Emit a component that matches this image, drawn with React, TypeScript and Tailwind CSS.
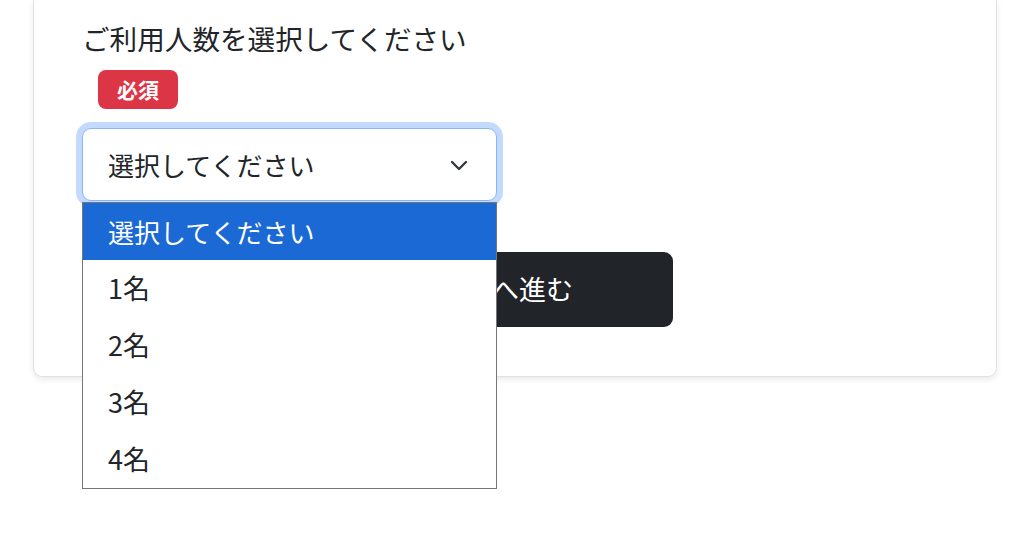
import React from "react";

const font = { fontFamily: '"Noto Sans CJK JP", "Noto Sans", sans-serif' };

export default function App() {
  const options = ["選択してください", "1名", "2名", "3名", "4名"];
  return (
    <div className="min-h-screen bg-white text-[#212529]" style={font}>
      <div className="ml-[33px] w-[964px] bg-white border border-t-0 border-[#dee2e6] rounded-b-[9px] shadow-[0_3px_6px_rgba(0,0,0,0.08)] pl-[48px] pr-[48px] pt-[18px] pb-[49px]">
        <div className="text-[27.6px] leading-[40px]">ご利用人数を選択してください</div>
        <div className="mt-[12px] ml-[16px] inline-flex h-[39px] w-[80px] items-center justify-center rounded-[8px] bg-[#dc3545] text-[21px] font-bold text-white">
          必須
        </div>
        <div className="relative mt-[19px] w-[415px]">
          <div className="flex h-[73px] items-center justify-between rounded-[9px] border border-[#86b7fe] bg-white pl-[25px] pr-[28px] text-[26px] ring-[6px] ring-[#c3dafe]">
            <span>選択してください</span>
            <svg width="18" height="12" viewBox="0 0 18 12" fill="none">
              <path d="M2 3l7 7 7-7" stroke="#343a40" strokeWidth="2.4" strokeLinecap="round" strokeLinejoin="round" />
            </svg>
          </div>
          <div className="absolute left-0 top-[74px] z-10 w-[415px] border border-[#767676] bg-white">
            {options.map((o, i) => (
              <div
                key={o}
                className={
                  i === 0
                    ? "flex h-[57px] items-center bg-[#1a69d4] pl-[25px] text-[26px] text-white"
                    : "flex h-[57px] items-center pl-[25px] text-[27px] text-[#212529]"
                }
              >
                {o}
              </div>
            ))}
          </div>
        </div>
        <div className="mt-[51px] ml-[283px] flex h-[75px] w-[308px] items-center justify-center rounded-[9px] bg-[#212529] text-[27px] text-white">
          次へ進む
        </div>
      </div>
    </div>
  );
}
